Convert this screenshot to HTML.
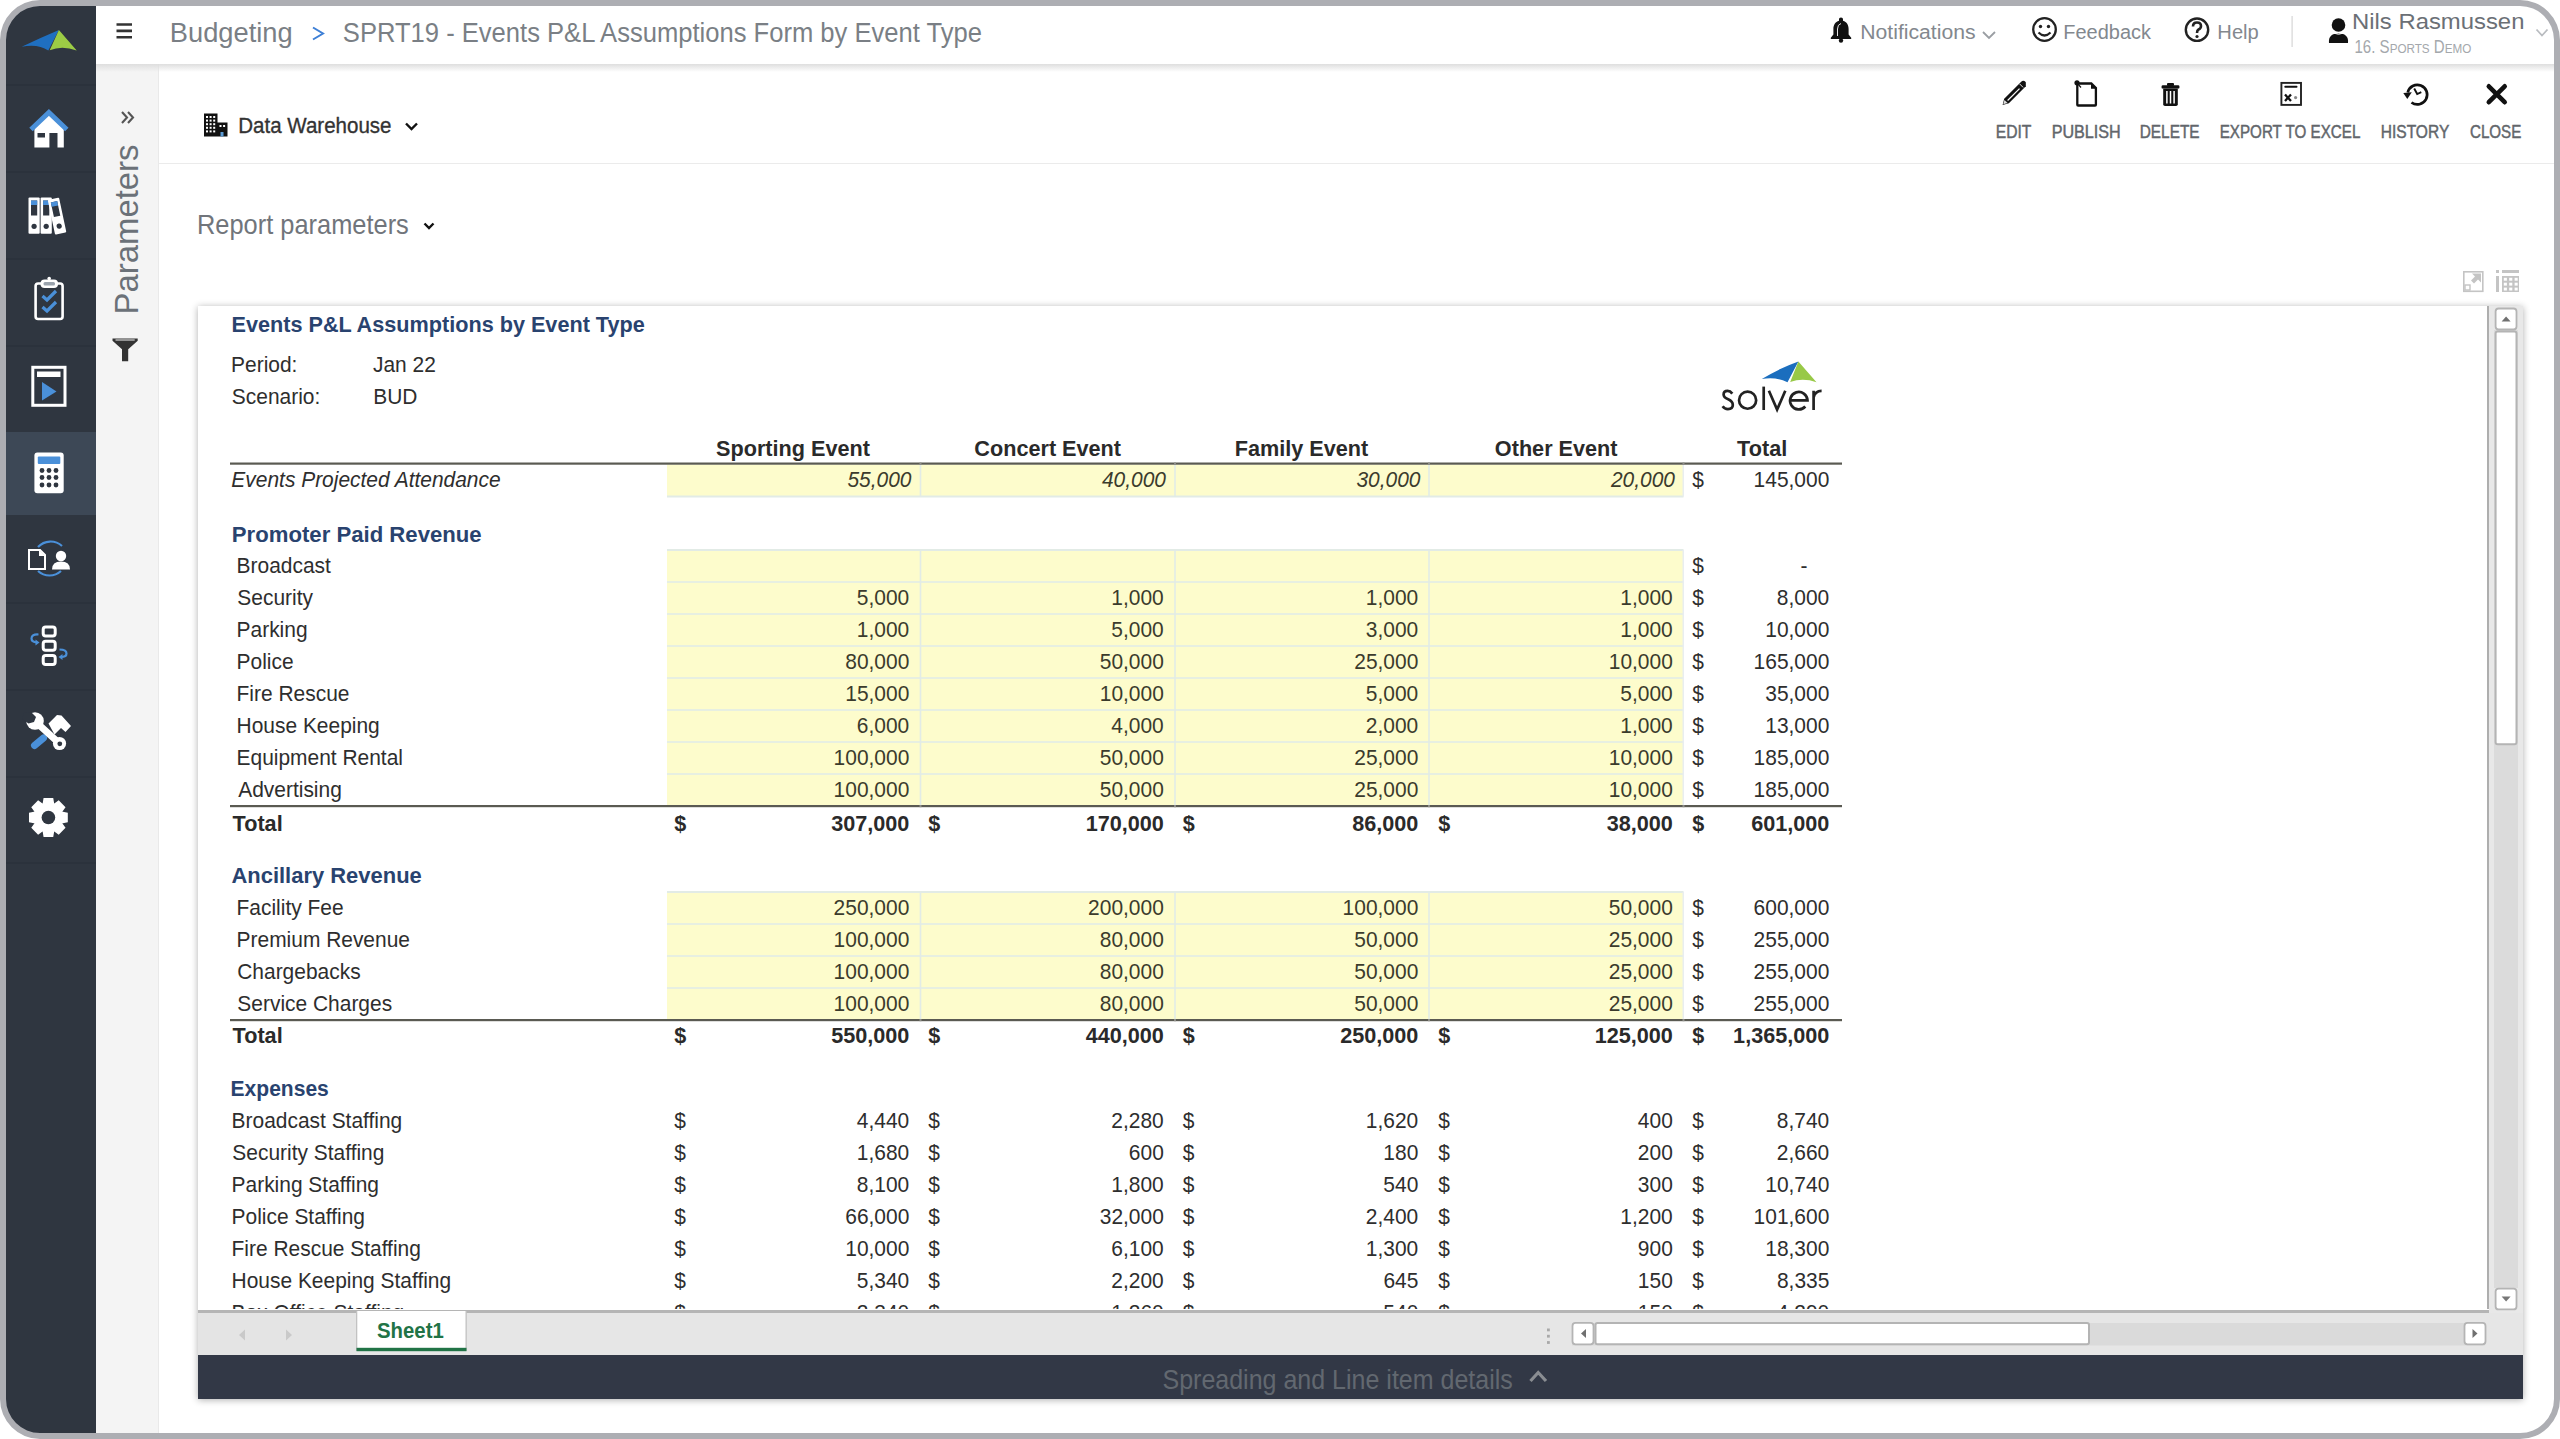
<!DOCTYPE html>
<html><head><meta charset="utf-8"><title>SPRT19 - Events P&amp;L Assumptions Form by Event Type</title>
<style>
html,body{margin:0;padding:0;width:2560px;height:1439px;overflow:hidden;background:#fff;}
body{position:relative;font-family:"Liberation Sans", sans-serif;}
svg text{font-family:"Liberation Sans", sans-serif;white-space:pre;}
</style></head><body>
<div style="position:absolute;left:0px;top:0px;width:2560px;height:1439px;background:#fff"></div><div style="position:absolute;left:159px;top:64px;width:2395px;height:1369px;background:#fff"></div><div style="position:absolute;left:96px;top:64px;width:63px;height:1369px;background:#f4f4f4;border-right:1px solid #e9e9e9;box-sizing:border-box"></div><div style="position:absolute;left:159px;top:64px;width:2395px;height:100px;background:#fff;border-bottom:1px solid #ebebeb;box-sizing:border-box"></div><div style="position:absolute;left:96px;top:6px;width:2458px;height:58px;background:#fff"></div><div style="position:absolute;left:96px;top:64px;width:2458px;height:8px;background:linear-gradient(#dedede,rgba(240,240,240,0))"></div><div style="position:absolute;left:6px;top:6px;width:90px;height:1427px;background:#2f3640"></div><div style="position:absolute;left:6px;top:84px;width:90px;height:2px;background:#2b323c"></div><div style="position:absolute;left:6px;top:170.5px;width:90px;height:2.0px;background:#2b323c"></div><div style="position:absolute;left:6px;top:257.5px;width:90px;height:2.0px;background:#2b323c"></div><div style="position:absolute;left:6px;top:344.5px;width:90px;height:2.0px;background:#2b323c"></div><div style="position:absolute;left:6px;top:601.5px;width:90px;height:2.0px;background:#2b323c"></div><div style="position:absolute;left:6px;top:688.5px;width:90px;height:2.0px;background:#2b323c"></div><div style="position:absolute;left:6px;top:775.5px;width:90px;height:2.0px;background:#2b323c"></div><div style="position:absolute;left:6px;top:861.5px;width:90px;height:2.0px;background:#2b323c"></div><div style="position:absolute;left:6px;top:432px;width:90px;height:83px;background:#3d4856"></div><div style="position:absolute;left:198px;top:306px;width:2325px;height:1093px;box-shadow:0 1px 7px rgba(0,0,0,.32);background:#fff"></div><svg style="position:absolute;left:0px;top:0px;" width="100" height="880" viewBox="0 0 100 880"><path fill="#1f6fc0" d="M21.7 46.7 Q40 38 58.9 30 L48.3 50.5 Q38 43.5 21.7 46.7Z"/><path fill="#9ccc45" d="M58.9 30 L76.7 50.5 Q62 45 49.7 50.3Z"/><path fill="#ffffff" d="M34.4 147.5V126.5L49 113L63.8 126.5V147.5H57.5V133H49.4V147.5Z"/><rect x="37.5" y="133" width="7.5" height="4.5" fill="#2f3640"/><path fill="none" stroke="#4a90d9" stroke-width="5" stroke-linejoin="miter" d="M31 129.5 L48.9 112.5 L66.8 129.5"/><g transform="rotate(0 34.1 233.8)"><rect x="28.5" y="197.5" width="11.2" height="36.3" fill="#ffffff" rx="1"/><rect x="31.0" y="200.5" width="6.199999999999999" height="15" fill="#2f3640"/><rect x="31.0" y="200.5" width="6.199999999999999" height="4.5" fill="#4a90d9"/><circle cx="34.1" cy="226.3" r="2.6" fill="#2f3640"/></g><g transform="rotate(0 46.2 233.8)"><rect x="40.6" y="197.5" width="11.2" height="36.3" fill="#ffffff" rx="1"/><rect x="43.1" y="200.5" width="6.199999999999999" height="15" fill="#2f3640"/><rect x="43.1" y="200.5" width="6.199999999999999" height="4.5" fill="#4a90d9"/><circle cx="46.2" cy="226.3" r="2.6" fill="#2f3640"/></g><g transform="rotate(-12 60.75 233.5)"><rect x="55" y="198" width="11.5" height="35.5" fill="#ffffff" rx="1"/><rect x="57.5" y="201" width="6.5" height="15" fill="#2f3640"/><rect x="57.5" y="201" width="6.5" height="4.5" fill="#4a90d9"/><circle cx="60.75" cy="226.0" r="2.6" fill="#2f3640"/></g><rect x="35.6" y="283.5" width="27" height="35.5" rx="2.5" fill="none" stroke="#ffffff" stroke-width="2.6"/><rect x="40.5" y="279.5" width="17.5" height="8.5" rx="4" fill="#ffffff"/><rect x="43.5" y="282" width="11.5" height="3.5" rx="1.5" fill="#9aa3ad"/><circle cx="49.2" cy="278.5" r="1.8" fill="#ffffff"/><path fill="none" stroke="#4a90d9" stroke-width="3.2" d="M42.5 296 L47 300 L56 291 M42.5 307 L47 311 L56 302"/><rect x="32.8" y="367.3" width="32.2" height="38" fill="none" stroke="#ffffff" stroke-width="3"/><rect x="37" y="371.5" width="23.5" height="5.5" fill="#ffffff"/><path fill="#4a90d9" d="M42 382 L56.5 391.5 L42 400.5Z"/><rect x="34.4" y="452.6" width="29.3" height="40.7" rx="3" fill="#ffffff"/><rect x="37.8" y="456.5" width="22.5" height="7.5" rx="1" fill="#4a90d9"/><circle cx="42" cy="470.5" r="2.4" fill="#2f3640"/><circle cx="49" cy="470.5" r="2.4" fill="#2f3640"/><circle cx="56" cy="470.5" r="2.4" fill="#2f3640"/><circle cx="42" cy="477.5" r="2.4" fill="#2f3640"/><circle cx="49" cy="477.5" r="2.4" fill="#2f3640"/><circle cx="56" cy="477.5" r="2.4" fill="#2f3640"/><circle cx="42" cy="485" r="2.4" fill="#2f3640"/><circle cx="49" cy="485" r="2.4" fill="#2f3640"/><circle cx="56" cy="485" r="2.4" fill="#2f3640"/><path fill="none" stroke="#4a90d9" stroke-width="2.2" d="M38 547 A17 17 0 0 1 62 546 M38 571 A17 17 0 0 0 61 571"/><path fill="#2f3640" stroke="#ffffff" stroke-width="2" d="M29 550H40L45 555V569H29Z"/><path fill="#ffffff" d="M39 550 V556 H45Z"/><circle cx="61" cy="556" r="5.2" fill="#ffffff"/><path fill="#ffffff" d="M52 569.5 Q52 561.5 61 561.5 Q70 561.5 70 569.5Z"/><rect x="43.2" y="627" width="12" height="9" rx="2.5" fill="none" stroke="#ffffff" stroke-width="3"/><rect x="43.2" y="641.2" width="12" height="9" rx="2.5" fill="none" stroke="#ffffff" stroke-width="3"/><rect x="43.2" y="655.5" width="12" height="9" rx="2.5" fill="none" stroke="#ffffff" stroke-width="3"/><path fill="none" stroke="#4a90d9" stroke-width="2.2" d="M38.5 634.5 Q31.5 634 31.5 638.5 Q31.5 642 37 642.5"/><path fill="#4a90d9" d="M35.5 639.5 L39.5 642.5 L35.5 645.5Z"/><path fill="none" stroke="#4a90d9" stroke-width="2.2" d="M59.5 649.5 Q66.5 649.5 66.5 653.5 Q66.5 657 61 657"/><path fill="#4a90d9" d="M62.5 654 L58.5 657 L62.5 660Z"/><path fill="none" stroke="#4a90d9" stroke-width="7" stroke-linecap="round" d="M34.5 745.5 L43.5 738"/><path fill="#ffffff" d="M48.5 723.5 L57 715 L61.5 715.5 L71 726 L65.5 732 L61 728 L54.5 734.5Z"/><path fill="none" stroke="#ffffff" stroke-width="7" stroke-linecap="round" d="M37.5 723.5 L59.5 743.5"/><circle cx="35" cy="721" r="8.8" fill="#ffffff"/><path fill="#2f3640" d="M24 713 L31 712 L36 717 L34 722 L28.5 723.5 L22 719Z"/><circle cx="59.5" cy="743.5" r="6.6" fill="#ffffff"/><circle cx="59.8" cy="743.8" r="2.4" fill="#2f3640"/><polygon fill="#ffffff" points="67.81,812.66 67.81,822.34 61.65,823.40 61.94,822.70 65.54,827.80 58.70,834.64 53.60,831.04 54.30,830.75 53.24,836.91 43.56,836.91 42.50,830.75 43.20,831.04 38.10,834.64 31.26,827.80 34.86,822.70 35.15,823.40 28.99,822.34 28.99,812.66 35.15,811.60 34.86,812.30 31.26,807.20 38.10,800.36 43.20,803.96 42.50,804.25 43.56,798.09 53.24,798.09 54.30,804.25 53.60,803.96 58.70,800.36 65.54,807.20 61.94,812.30 61.65,811.60"/><circle cx="48.4" cy="817.5" r="6.8" fill="#2f3640"/></svg><svg style="position:absolute;left:96px;top:6px;" width="2458" height="58" viewBox="96 6 2458 58"><path fill="#333" d="M116.5 23.2h15.5v2.6h-15.5zM116.5 29.6h15.5v2.6h-15.5zM116.5 36h15.5v2.6h-15.5z"/><text transform="translate(169.75,42.20) scale(0.9628,1)" font-size="28.36" fill="#7a7f85">Budgeting</text><path fill="none" stroke="#3d7fd6" stroke-width="2" d="M313 27.5 L323 33.5 L313 39.5"/><text transform="translate(342.85,42.00) scale(0.9018,1)" font-size="28.36" fill="#7a7f85">SPRT19 - Events P&amp;L Assumptions Form by Event Type</text><path fill="#111" d="M1841 17.5c1.3 0 2 .9 2 2v1.3c3.8 1 5.6 4.2 5.6 8.3v5.4l2.6 3.3v1.3h-20.4v-1.3l2.6-3.3v-5.4c0-4.1 1.8-7.3 5.6-8.3v-1.3c0-1.1.7-2 2-2z"/><circle cx="1841" cy="40.6" r="2.2" fill="#111"/><path fill="none" stroke="#fff" stroke-width="0.9" d="M1837.5 36 V29 Q1837.5 24.5 1841 23.5"/><text transform="translate(1860.25,38.70) scale(1.0411,1)" font-size="20.36" fill="#83888e">Notifications</text><path fill="none" stroke="#9a9ea3" stroke-width="1.8" d="M1983 32 L1989 38 L1995 32"/><circle cx="2044.5" cy="29.5" r="11.3" fill="none" stroke="#222" stroke-width="2.3"/><circle cx="2040.5" cy="26.5" r="1.7" fill="#222"/><circle cx="2048.5" cy="26.5" r="1.7" fill="#222"/><path fill="none" stroke="#222" stroke-width="2.2" d="M2038.5 32.5 Q2044.5 38.5 2050.5 32.5"/><text transform="translate(2063.35,38.70) scale(0.9799,1)" font-size="20.36" fill="#83888e">Feedback</text><circle cx="2197" cy="29.7" r="11.2" fill="none" stroke="#222" stroke-width="2.4"/><path fill="none" stroke="#222" stroke-width="2.6" d="M2193 26.5 Q2193 22.5 2197 22.5 Q2201 22.5 2201 26 Q2201 28.5 2198.5 29.5 Q2197 30.3 2197 33"/><circle cx="2197" cy="36.5" r="1.6" fill="#222"/><text transform="translate(2217.34,38.70) scale(0.9910,1)" font-size="20.36" fill="#83888e">Help</text><rect x="2291.5" y="16" width="1.2" height="31" fill="#d6d6d6"/><circle cx="2338.5" cy="25" r="6.8" fill="#111"/><path fill="#111" d="M2329 43 Q2328 33.5 2338.5 33.5 Q2349 33.5 2348 43Z"/><path fill="none" stroke="#fff" stroke-width="1" d="M2333 33 Q2338.5 35.5 2344 33"/><text transform="translate(2352.03,29.00) scale(1.0730,1)" font-size="22.25" fill="#6b7076">Nils Rasmussen</text><text transform="translate(2354.5,52.6) scale(0.86,1)" font-size="17.5" fill="#a4a8ac">16. S<tspan font-size="13.6">PORTS</tspan> D<tspan font-size="13.6">EMO</tspan></text><path fill="none" stroke="#b9bcc0" stroke-width="1.8" d="M2536.5 29.5 L2542 35.5 L2547.5 29.5"/></svg><svg style="position:absolute;left:1980px;top:70px;" width="574" height="90" viewBox="1980 70 574 90"><text stroke="#62666b" stroke-width="0.45" transform="translate(1995.71,137.70) scale(0.8966,1)" font-size="17.45" fill="#62666b">EDIT</text><text stroke="#62666b" stroke-width="0.45" transform="translate(2051.67,137.70) scale(0.9259,1)" font-size="17.45" fill="#62666b">PUBLISH</text><text stroke="#62666b" stroke-width="0.45" transform="translate(2139.73,137.70) scale(0.8826,1)" font-size="17.45" fill="#62666b">DELETE</text><text stroke="#62666b" stroke-width="0.45" transform="translate(2219.75,137.70) scale(0.8706,1)" font-size="17.45" fill="#62666b">EXPORT TO EXCEL</text><text stroke="#62666b" stroke-width="0.45" transform="translate(2380.72,137.70) scale(0.8916,1)" font-size="17.45" fill="#62666b">HISTORY</text><text stroke="#62666b" stroke-width="0.45" transform="translate(2469.94,137.70) scale(0.8687,1)" font-size="17.45" fill="#62666b">CLOSE</text><path fill="#111" d="M2002.6 105 L2004.2 98.63 L2021.17 81.67 Q2023.5 79.8 2025.83 82.2 L2025.83 86.33 L2008.87 103.29Z"/><path stroke="#fff" stroke-width="1.2" d="M2007.6 100.5 L2019.5 88.6"/><path stroke="#fff" stroke-width="0.9" d="M2019.6 83.9 L2023.1 87.4"/><path fill="#ddd" d="M2003.3 104.3 L2004.5 100 L2007.6 103Z"/><path fill="none" stroke="#111" stroke-width="2.3" d="M2077.3 83.5h14l4.6 4.6v16.6q0 .8-.8.8h-17q-.8 0-.8-.8z"/><path fill="#111" d="M2091 83.5v5.3h5z"/><circle cx="2077" cy="82.8" r="2.6" fill="#111"/><path stroke="#111" stroke-width="1.2" d="M2077.5 83.5l3.5 4"/><rect x="2161.6" y="85.2" width="17.8" height="3.4" rx="1.2" fill="#111"/><rect x="2167" y="83" width="7" height="3" rx="1" fill="#111"/><path fill="#111" d="M2163.2 88.5h14.6v15.8q0 1.8-1.8 1.8h-11q-1.8 0-1.8-1.8z"/><path stroke="#fff" stroke-width="1.5" d="M2166.9 91v12.5M2170.5 91v12.5M2174.1 91v12.5"/><rect x="2281.4" y="82.9" width="19.6" height="22" fill="none" stroke="#222" stroke-width="1.9"/><rect x="2284.3" y="85.8" width="13.2" height="1.9" rx="0.9" fill="#111"/><path stroke="#111" stroke-width="2.3" d="M2285 94.5l6 6.5M2291 94.5l-6 6.5"/><circle cx="2295.6" cy="97.6" r="1.6" fill="#888"/><path fill="none" stroke="#111" stroke-width="2.7" d="M2407.8 92.5 A9.8 9.8 0 1 1 2411.5 102.5"/><path fill="#111" d="M2403.3 93 L2411.8 92.2 L2407.3 99Z"/><path fill="none" stroke="#111" stroke-width="1.9" d="M2414.2 88.5 L2417.2 94 L2421.3 92.2"/><path stroke="#111" stroke-width="4.6" stroke-linecap="round" d="M2488.8 86.3l15.9 15.9M2504.7 86.3l-15.9 15.9"/></svg><svg style="position:absolute;left:96px;top:64px;" width="63" height="336" viewBox="96 64 63 336"><path fill="none" stroke="#555" stroke-width="2.1" d="M122 112l5 5.5l-5 5.5M128 112l5 5.5l-5 5.5"/><text transform="translate(137.7,314.41) rotate(-90) scale(0.9832,1)" font-size="33.45" fill="#6b7178">Parameters</text><path fill="#333" d="M112.5 338.5h25.2v2.2l-9.5 8.5v12.1h-6.2v-12.1l-9.5-8.5z"/><path fill="#f4f4f4" d="M115.5 339.5h19.2v1h-19.2z"/></svg><svg style="position:absolute;left:160px;top:100px;" width="2394" height="200" viewBox="160 100 2394 200"><path fill="#111" d="M204 113.5h13.5v23h-13.5z M217.5 122.5h10v14h-10z"/><rect x="206.0" y="116.0" width="2" height="2" fill="#fff"/><rect x="209.6" y="116.0" width="2" height="2" fill="#fff"/><rect x="213.2" y="116.0" width="2" height="2" fill="#fff"/><rect x="206.0" y="119.6" width="2" height="2" fill="#fff"/><rect x="209.6" y="119.6" width="2" height="2" fill="#fff"/><rect x="213.2" y="119.6" width="2" height="2" fill="#fff"/><rect x="206.0" y="123.2" width="2" height="2" fill="#fff"/><rect x="209.6" y="123.2" width="2" height="2" fill="#fff"/><rect x="213.2" y="123.2" width="2" height="2" fill="#fff"/><rect x="206.0" y="126.8" width="2" height="2" fill="#fff"/><rect x="209.6" y="126.8" width="2" height="2" fill="#fff"/><rect x="213.2" y="126.8" width="2" height="2" fill="#fff"/><rect x="206.0" y="130.4" width="2" height="2" fill="#fff"/><rect x="209.6" y="130.4" width="2" height="2" fill="#fff"/><rect x="213.2" y="130.4" width="2" height="2" fill="#fff"/><rect x="219.5" y="125" width="2" height="2" fill="#fff"/><rect x="223.1" y="125" width="2" height="2" fill="#fff"/><rect x="220.5" y="132" width="3" height="4.5" fill="#5b9bd5"/><text stroke="#333" stroke-width="0.35" transform="translate(238.31,133.00) scale(0.9226,1)" font-size="22.25" fill="#333">Data Warehouse</text><path fill="none" stroke="#111" stroke-width="2.4" d="M406 123.5l5.5 5.5l5.5-5.5"/><text transform="translate(196.90,234.40) scale(0.9200,1)" font-size="27.64" fill="#71757b">Report parameters</text><path fill="none" stroke="#111" stroke-width="2.4" d="M424.5 223.5l4.5 4.5l4.5-4.5"/><rect x="2463.8" y="271.8" width="19" height="19.5" fill="none" stroke="#c4c4c4" stroke-width="1.6"/><rect x="2465" y="285" width="5" height="5" fill="none" stroke="#c4c4c4" stroke-width="1.4"/><path fill="#c4c4c4" d="M2472 273.5h9v9l-3-3l-4 4l-3-3l4-4z"/><rect x="2496" y="270" width="3" height="3" fill="#c4c4c4"/><rect x="2496" y="276" width="3" height="16" fill="#c4c4c4"/><rect x="2502" y="270" width="17" height="3" fill="#c4c4c4"/><rect x="2502" y="276" width="17" height="16" fill="#c4c4c4"/><rect x="2503.8" y="277.8" width="3.1" height="2.9" fill="#fff"/><rect x="2509.2" y="277.8" width="3.1" height="2.9" fill="#fff"/><rect x="2514.6" y="277.8" width="3.1" height="2.9" fill="#fff"/><rect x="2503.8" y="282.7" width="3.1" height="2.9" fill="#fff"/><rect x="2509.2" y="282.7" width="3.1" height="2.9" fill="#fff"/><rect x="2514.6" y="282.7" width="3.1" height="2.9" fill="#fff"/><rect x="2503.8" y="287.6" width="3.1" height="2.9" fill="#fff"/><rect x="2509.2" y="287.6" width="3.1" height="2.9" fill="#fff"/><rect x="2514.6" y="287.6" width="3.1" height="2.9" fill="#fff"/></svg><svg style="position:absolute;left:198px;top:306px;" width="2289" height="1003" viewBox="198 306 2289 1003"><rect x="198" y="306" width="2289" height="1005" fill="#fff"/><rect x="667" y="464.5" width="1016.5" height="32" fill="#fdfccc"/><rect x="667" y="495.5" width="1016.5" height="2" fill="#e2ebe6"/><rect x="919.7" y="464.5" width="1.6" height="32" fill="#e2ebe6"/><rect x="1174.2" y="464.5" width="1.6" height="32" fill="#e2ebe6"/><rect x="1428.2" y="464.5" width="1.6" height="32" fill="#e2ebe6"/><rect x="1682.5" y="464.5" width="1.5" height="32" fill="#e9eef0"/><rect x="667" y="550" width="1016.5" height="256" fill="#fdfccc"/><rect x="667" y="581.2" width="1016.5" height="1.6" fill="#e2ebe6"/><rect x="667" y="613.2" width="1016.5" height="1.6" fill="#e2ebe6"/><rect x="667" y="645.2" width="1016.5" height="1.6" fill="#e2ebe6"/><rect x="667" y="677.2" width="1016.5" height="1.6" fill="#e2ebe6"/><rect x="667" y="709.2" width="1016.5" height="1.6" fill="#e2ebe6"/><rect x="667" y="741.2" width="1016.5" height="1.6" fill="#e2ebe6"/><rect x="667" y="773.2" width="1016.5" height="1.6" fill="#e2ebe6"/><rect x="667" y="549" width="1016.5" height="2" fill="#e2ebe6"/><rect x="667" y="805" width="1016.5" height="2" fill="#e2ebe6"/><rect x="919.7" y="550" width="1.6" height="256" fill="#e2ebe6"/><rect x="1174.2" y="550" width="1.6" height="256" fill="#e2ebe6"/><rect x="1428.2" y="550" width="1.6" height="256" fill="#e2ebe6"/><rect x="1682.5" y="550" width="1.5" height="256" fill="#e9eef0"/><rect x="667" y="892" width="1016.5" height="128" fill="#fdfccc"/><rect x="667" y="923.2" width="1016.5" height="1.6" fill="#e2ebe6"/><rect x="667" y="955.2" width="1016.5" height="1.6" fill="#e2ebe6"/><rect x="667" y="987.2" width="1016.5" height="1.6" fill="#e2ebe6"/><rect x="667" y="891" width="1016.5" height="2" fill="#e2ebe6"/><rect x="667" y="1019" width="1016.5" height="2" fill="#e2ebe6"/><rect x="919.7" y="892" width="1.6" height="128" fill="#e2ebe6"/><rect x="1174.2" y="892" width="1.6" height="128" fill="#e2ebe6"/><rect x="1428.2" y="892" width="1.6" height="128" fill="#e2ebe6"/><rect x="1682.5" y="892" width="1.5" height="128" fill="#e9eef0"/><rect x="230" y="462.5" width="1612" height="2.2" fill="#5a5a52"/><rect x="919.5" y="462.5" width="2" height="2.2" fill="#8e8e88"/><rect x="1174" y="462.5" width="2" height="2.2" fill="#8e8e88"/><rect x="1428" y="462.5" width="2" height="2.2" fill="#8e8e88"/><rect x="1682.5" y="462.5" width="2" height="2.2" fill="#8e8e88"/><rect x="230" y="805" width="1612" height="2.2" fill="#5a5a52"/><rect x="919.5" y="805" width="2" height="2.2" fill="#8e8e88"/><rect x="1174" y="805" width="2" height="2.2" fill="#8e8e88"/><rect x="1428" y="805" width="2" height="2.2" fill="#8e8e88"/><rect x="1682.5" y="805" width="2" height="2.2" fill="#8e8e88"/><rect x="230" y="1019" width="1612" height="2.2" fill="#5a5a52"/><rect x="919.5" y="1019" width="2" height="2.2" fill="#8e8e88"/><rect x="1174" y="1019" width="2" height="2.2" fill="#8e8e88"/><rect x="1428" y="1019" width="2" height="2.2" fill="#8e8e88"/><rect x="1682.5" y="1019" width="2" height="2.2" fill="#8e8e88"/><text transform="translate(231.54,332.00) scale(0.9600,1)" font-size="22.55" fill="#29436f" font-weight="bold">Events P&amp;L Assumptions by Event Type</text><text transform="translate(231.07,371.70) scale(0.9600,1)" font-size="21.82" fill="#2e2e2e">Period:</text><text transform="translate(372.99,371.70) scale(0.9600,1)" font-size="21.82" fill="#2e2e2e">Jan 22</text><text transform="translate(231.86,403.60) scale(0.9600,1)" font-size="21.82" fill="#2e2e2e">Scenario:</text><text transform="translate(373.27,403.60) scale(0.9600,1)" font-size="21.82" fill="#2e2e2e">BUD</text><path fill="#1b6ebe" d="M1761.8 379 Q1780 368 1798.4 361.5 L1787.5 382.3 Q1776 376.5 1761.8 379Z"/><path fill="#98c947" d="M1798.4 361.5 L1816.5 382.3 Q1803 377.5 1790.2 382Z"/><g fill="none" stroke="#222" stroke-width="2.7" stroke-linecap="butt"><path d="M1732.3 393.6 Q1730.3 390.9 1727.6 390.9 Q1723.6 390.9 1723.6 394.5 Q1723.6 397.4 1728.2 399.3 Q1732.8 401.3 1732.8 405 Q1732.8 409.1 1727.9 409.1 Q1724.6 409.1 1722.6 406.2"/><circle cx="1747.6" cy="400.2" r="8.55"/><path d="M1763.7 386.6 V410"/><path d="M1768.9 390.8 L1777.1 409.6 L1785.3 390.8" stroke-linejoin="miter"/><path d="M1789.9 400.4 H1807.5 A8.7 8.7 0 1 0 1805.3 406.5"/><path d="M1813.6 390.8 V410 M1813.6 397.5 Q1815 390.9 1821.6 390.9"/></g><text transform="translate(716.07,456.20) scale(0.9600,1)" font-size="22.55" fill="#2a2a2a" font-weight="bold">Sporting Event</text><text transform="translate(974.33,456.20) scale(0.9600,1)" font-size="22.55" fill="#2a2a2a" font-weight="bold">Concert Event</text><text transform="translate(1234.66,456.20) scale(0.9600,1)" font-size="22.55" fill="#2a2a2a" font-weight="bold">Family Event</text><text transform="translate(1494.87,456.20) scale(0.9600,1)" font-size="22.55" fill="#2a2a2a" font-weight="bold">Other Event</text><text transform="translate(1737.10,456.20) scale(0.9600,1)" font-size="22.55" fill="#2a2a2a" font-weight="bold">Total</text><text transform="translate(231.37,487.20) scale(0.9600,1)" font-size="21.82" fill="#2e2e2e" font-style="italic">Events Projected Attendance</text><text transform="translate(847.42,487.20) scale(0.9600,1)" font-size="21.82" fill="#3b3b2c" font-style="italic">55,000</text><text transform="translate(1101.92,487.20) scale(0.9600,1)" font-size="21.82" fill="#3b3b2c" font-style="italic">40,000</text><text transform="translate(1356.42,487.20) scale(0.9600,1)" font-size="21.82" fill="#3b3b2c" font-style="italic">30,000</text><text transform="translate(1610.92,487.20) scale(0.9600,1)" font-size="21.82" fill="#3b3b2c" font-style="italic">20,000</text><text transform="translate(1692.29,487.20) scale(0.9600,1)" font-size="21.82" fill="#2e2e2e">$</text><text transform="translate(1753.62,487.20) scale(0.9600,1)" font-size="21.82" fill="#2e2e2e">145,000</text><text transform="translate(231.80,542.20) scale(0.9827,1)" font-size="22.55" fill="#29436f" font-weight="bold">Promoter Paid Revenue</text><text transform="translate(236.57,573.30) scale(0.9600,1)" font-size="21.82" fill="#2e2e2e">Broadcast</text><text transform="translate(1692.29,573.30) scale(0.9600,1)" font-size="21.82" fill="#2e2e2e">$</text><text transform="translate(1800.43,573.30) scale(0.9600,1)" font-size="21.82" fill="#2e2e2e">-</text><text transform="translate(237.36,605.30) scale(0.9600,1)" font-size="21.82" fill="#2e2e2e">Security</text><text transform="translate(856.87,605.30) scale(0.9600,1)" font-size="21.82" fill="#3b3b2c">5,000</text><text transform="translate(1111.37,605.30) scale(0.9600,1)" font-size="21.82" fill="#3b3b2c">1,000</text><text transform="translate(1365.87,605.30) scale(0.9600,1)" font-size="21.82" fill="#3b3b2c">1,000</text><text transform="translate(1620.37,605.30) scale(0.9600,1)" font-size="21.82" fill="#3b3b2c">1,000</text><text transform="translate(1692.29,605.30) scale(0.9600,1)" font-size="21.82" fill="#2e2e2e">$</text><text transform="translate(1776.87,605.30) scale(0.9600,1)" font-size="21.82" fill="#2e2e2e">8,000</text><text transform="translate(236.57,637.30) scale(0.9600,1)" font-size="21.82" fill="#2e2e2e">Parking</text><text transform="translate(856.87,637.30) scale(0.9600,1)" font-size="21.82" fill="#3b3b2c">1,000</text><text transform="translate(1111.37,637.30) scale(0.9600,1)" font-size="21.82" fill="#3b3b2c">5,000</text><text transform="translate(1365.87,637.30) scale(0.9600,1)" font-size="21.82" fill="#3b3b2c">3,000</text><text transform="translate(1620.37,637.30) scale(0.9600,1)" font-size="21.82" fill="#3b3b2c">1,000</text><text transform="translate(1692.29,637.30) scale(0.9600,1)" font-size="21.82" fill="#2e2e2e">$</text><text transform="translate(1765.24,637.30) scale(0.9600,1)" font-size="21.82" fill="#2e2e2e">10,000</text><text transform="translate(236.57,669.30) scale(0.9600,1)" font-size="21.82" fill="#2e2e2e">Police</text><text transform="translate(845.24,669.30) scale(0.9600,1)" font-size="21.82" fill="#3b3b2c">80,000</text><text transform="translate(1099.74,669.30) scale(0.9600,1)" font-size="21.82" fill="#3b3b2c">50,000</text><text transform="translate(1354.24,669.30) scale(0.9600,1)" font-size="21.82" fill="#3b3b2c">25,000</text><text transform="translate(1608.74,669.30) scale(0.9600,1)" font-size="21.82" fill="#3b3b2c">10,000</text><text transform="translate(1692.29,669.30) scale(0.9600,1)" font-size="21.82" fill="#2e2e2e">$</text><text transform="translate(1753.62,669.30) scale(0.9600,1)" font-size="21.82" fill="#2e2e2e">165,000</text><text transform="translate(236.57,701.30) scale(0.9600,1)" font-size="21.82" fill="#2e2e2e">Fire Rescue</text><text transform="translate(845.24,701.30) scale(0.9600,1)" font-size="21.82" fill="#3b3b2c">15,000</text><text transform="translate(1099.74,701.30) scale(0.9600,1)" font-size="21.82" fill="#3b3b2c">10,000</text><text transform="translate(1365.87,701.30) scale(0.9600,1)" font-size="21.82" fill="#3b3b2c">5,000</text><text transform="translate(1620.37,701.30) scale(0.9600,1)" font-size="21.82" fill="#3b3b2c">5,000</text><text transform="translate(1692.29,701.30) scale(0.9600,1)" font-size="21.82" fill="#2e2e2e">$</text><text transform="translate(1765.24,701.30) scale(0.9600,1)" font-size="21.82" fill="#2e2e2e">35,000</text><text transform="translate(236.57,733.30) scale(0.9600,1)" font-size="21.82" fill="#2e2e2e">House Keeping</text><text transform="translate(856.87,733.30) scale(0.9600,1)" font-size="21.82" fill="#3b3b2c">6,000</text><text transform="translate(1111.37,733.30) scale(0.9600,1)" font-size="21.82" fill="#3b3b2c">4,000</text><text transform="translate(1365.87,733.30) scale(0.9600,1)" font-size="21.82" fill="#3b3b2c">2,000</text><text transform="translate(1620.37,733.30) scale(0.9600,1)" font-size="21.82" fill="#3b3b2c">1,000</text><text transform="translate(1692.29,733.30) scale(0.9600,1)" font-size="21.82" fill="#2e2e2e">$</text><text transform="translate(1765.24,733.30) scale(0.9600,1)" font-size="21.82" fill="#2e2e2e">13,000</text><text transform="translate(236.57,765.30) scale(0.9600,1)" font-size="21.82" fill="#2e2e2e">Equipment Rental</text><text transform="translate(833.62,765.30) scale(0.9600,1)" font-size="21.82" fill="#3b3b2c">100,000</text><text transform="translate(1099.74,765.30) scale(0.9600,1)" font-size="21.82" fill="#3b3b2c">50,000</text><text transform="translate(1354.24,765.30) scale(0.9600,1)" font-size="21.82" fill="#3b3b2c">25,000</text><text transform="translate(1608.74,765.30) scale(0.9600,1)" font-size="21.82" fill="#3b3b2c">10,000</text><text transform="translate(1692.29,765.30) scale(0.9600,1)" font-size="21.82" fill="#2e2e2e">$</text><text transform="translate(1753.62,765.30) scale(0.9600,1)" font-size="21.82" fill="#2e2e2e">185,000</text><text transform="translate(238.25,797.30) scale(0.9600,1)" font-size="21.82" fill="#2e2e2e">Advertising</text><text transform="translate(833.62,797.30) scale(0.9600,1)" font-size="21.82" fill="#3b3b2c">100,000</text><text transform="translate(1099.74,797.30) scale(0.9600,1)" font-size="21.82" fill="#3b3b2c">50,000</text><text transform="translate(1354.24,797.30) scale(0.9600,1)" font-size="21.82" fill="#3b3b2c">25,000</text><text transform="translate(1608.74,797.30) scale(0.9600,1)" font-size="21.82" fill="#3b3b2c">10,000</text><text transform="translate(1692.29,797.30) scale(0.9600,1)" font-size="21.82" fill="#2e2e2e">$</text><text transform="translate(1753.62,797.30) scale(0.9600,1)" font-size="21.82" fill="#2e2e2e">185,000</text><text transform="translate(232.58,830.50) scale(0.9600,1)" font-size="22.55" fill="#2a2a2a" font-weight="bold">Total</text><text transform="translate(674.23,830.50) scale(0.9600,1)" font-size="22.55" fill="#2a2a2a" font-weight="bold">$</text><text transform="translate(831.18,830.50) scale(0.9600,1)" font-size="22.55" fill="#2a2a2a" font-weight="bold">307,000</text><text transform="translate(928.23,830.50) scale(0.9600,1)" font-size="22.55" fill="#2a2a2a" font-weight="bold">$</text><text transform="translate(1085.68,830.50) scale(0.9600,1)" font-size="22.55" fill="#2a2a2a" font-weight="bold">170,000</text><text transform="translate(1182.73,830.50) scale(0.9600,1)" font-size="22.55" fill="#2a2a2a" font-weight="bold">$</text><text transform="translate(1352.19,830.50) scale(0.9600,1)" font-size="22.55" fill="#2a2a2a" font-weight="bold">86,000</text><text transform="translate(1438.23,830.50) scale(0.9600,1)" font-size="22.55" fill="#2a2a2a" font-weight="bold">$</text><text transform="translate(1606.69,830.50) scale(0.9600,1)" font-size="22.55" fill="#2a2a2a" font-weight="bold">38,000</text><text transform="translate(1692.23,830.50) scale(0.9600,1)" font-size="22.55" fill="#2a2a2a" font-weight="bold">$</text><text transform="translate(1751.18,830.50) scale(0.9600,1)" font-size="22.55" fill="#2a2a2a" font-weight="bold">601,000</text><text transform="translate(231.45,883.30) scale(0.9734,1)" font-size="22.55" fill="#29436f" font-weight="bold">Ancillary Revenue</text><text transform="translate(236.57,915.00) scale(0.9600,1)" font-size="21.82" fill="#2e2e2e">Facility Fee</text><text transform="translate(833.62,915.00) scale(0.9600,1)" font-size="21.82" fill="#3b3b2c">250,000</text><text transform="translate(1088.12,915.00) scale(0.9600,1)" font-size="21.82" fill="#3b3b2c">200,000</text><text transform="translate(1342.62,915.00) scale(0.9600,1)" font-size="21.82" fill="#3b3b2c">100,000</text><text transform="translate(1608.74,915.00) scale(0.9600,1)" font-size="21.82" fill="#3b3b2c">50,000</text><text transform="translate(1692.29,915.00) scale(0.9600,1)" font-size="21.82" fill="#2e2e2e">$</text><text transform="translate(1753.62,915.00) scale(0.9600,1)" font-size="21.82" fill="#2e2e2e">600,000</text><text transform="translate(236.57,947.00) scale(0.9600,1)" font-size="21.82" fill="#2e2e2e">Premium Revenue</text><text transform="translate(833.62,947.00) scale(0.9600,1)" font-size="21.82" fill="#3b3b2c">100,000</text><text transform="translate(1099.74,947.00) scale(0.9600,1)" font-size="21.82" fill="#3b3b2c">80,000</text><text transform="translate(1354.24,947.00) scale(0.9600,1)" font-size="21.82" fill="#3b3b2c">50,000</text><text transform="translate(1608.74,947.00) scale(0.9600,1)" font-size="21.82" fill="#3b3b2c">25,000</text><text transform="translate(1692.29,947.00) scale(0.9600,1)" font-size="21.82" fill="#2e2e2e">$</text><text transform="translate(1753.62,947.00) scale(0.9600,1)" font-size="21.82" fill="#2e2e2e">255,000</text><text transform="translate(237.25,979.00) scale(0.9600,1)" font-size="21.82" fill="#2e2e2e">Chargebacks</text><text transform="translate(833.62,979.00) scale(0.9600,1)" font-size="21.82" fill="#3b3b2c">100,000</text><text transform="translate(1099.74,979.00) scale(0.9600,1)" font-size="21.82" fill="#3b3b2c">80,000</text><text transform="translate(1354.24,979.00) scale(0.9600,1)" font-size="21.82" fill="#3b3b2c">50,000</text><text transform="translate(1608.74,979.00) scale(0.9600,1)" font-size="21.82" fill="#3b3b2c">25,000</text><text transform="translate(1692.29,979.00) scale(0.9600,1)" font-size="21.82" fill="#2e2e2e">$</text><text transform="translate(1753.62,979.00) scale(0.9600,1)" font-size="21.82" fill="#2e2e2e">255,000</text><text transform="translate(237.36,1011.00) scale(0.9600,1)" font-size="21.82" fill="#2e2e2e">Service Charges</text><text transform="translate(833.62,1011.00) scale(0.9600,1)" font-size="21.82" fill="#3b3b2c">100,000</text><text transform="translate(1099.74,1011.00) scale(0.9600,1)" font-size="21.82" fill="#3b3b2c">80,000</text><text transform="translate(1354.24,1011.00) scale(0.9600,1)" font-size="21.82" fill="#3b3b2c">50,000</text><text transform="translate(1608.74,1011.00) scale(0.9600,1)" font-size="21.82" fill="#3b3b2c">25,000</text><text transform="translate(1692.29,1011.00) scale(0.9600,1)" font-size="21.82" fill="#2e2e2e">$</text><text transform="translate(1753.62,1011.00) scale(0.9600,1)" font-size="21.82" fill="#2e2e2e">255,000</text><text transform="translate(232.58,1043.30) scale(0.9600,1)" font-size="22.55" fill="#2a2a2a" font-weight="bold">Total</text><text transform="translate(674.23,1043.30) scale(0.9600,1)" font-size="22.55" fill="#2a2a2a" font-weight="bold">$</text><text transform="translate(831.18,1043.30) scale(0.9600,1)" font-size="22.55" fill="#2a2a2a" font-weight="bold">550,000</text><text transform="translate(928.23,1043.30) scale(0.9600,1)" font-size="22.55" fill="#2a2a2a" font-weight="bold">$</text><text transform="translate(1085.68,1043.30) scale(0.9600,1)" font-size="22.55" fill="#2a2a2a" font-weight="bold">440,000</text><text transform="translate(1182.73,1043.30) scale(0.9600,1)" font-size="22.55" fill="#2a2a2a" font-weight="bold">$</text><text transform="translate(1340.18,1043.30) scale(0.9600,1)" font-size="22.55" fill="#2a2a2a" font-weight="bold">250,000</text><text transform="translate(1438.23,1043.30) scale(0.9600,1)" font-size="22.55" fill="#2a2a2a" font-weight="bold">$</text><text transform="translate(1594.68,1043.30) scale(0.9600,1)" font-size="22.55" fill="#2a2a2a" font-weight="bold">125,000</text><text transform="translate(1692.23,1043.30) scale(0.9600,1)" font-size="22.55" fill="#2a2a2a" font-weight="bold">$</text><text transform="translate(1733.11,1043.30) scale(0.9600,1)" font-size="22.55" fill="#2a2a2a" font-weight="bold">1,365,000</text><text transform="translate(230.58,1096.00) scale(0.9338,1)" font-size="22.55" fill="#29436f" font-weight="bold">Expenses</text><text transform="translate(231.57,1128.30) scale(0.9600,1)" font-size="21.82" fill="#2e2e2e">Broadcast Staffing</text><text transform="translate(674.29,1128.30) scale(0.9600,1)" font-size="21.82" fill="#2e2e2e">$</text><text transform="translate(856.87,1128.30) scale(0.9600,1)" font-size="21.82" fill="#2e2e2e">4,440</text><text transform="translate(928.29,1128.30) scale(0.9600,1)" font-size="21.82" fill="#2e2e2e">$</text><text transform="translate(1111.37,1128.30) scale(0.9600,1)" font-size="21.82" fill="#2e2e2e">2,280</text><text transform="translate(1182.79,1128.30) scale(0.9600,1)" font-size="21.82" fill="#2e2e2e">$</text><text transform="translate(1365.87,1128.30) scale(0.9600,1)" font-size="21.82" fill="#2e2e2e">1,620</text><text transform="translate(1438.29,1128.30) scale(0.9600,1)" font-size="21.82" fill="#2e2e2e">$</text><text transform="translate(1637.86,1128.30) scale(0.9600,1)" font-size="21.82" fill="#2e2e2e">400</text><text transform="translate(1692.29,1128.30) scale(0.9600,1)" font-size="21.82" fill="#2e2e2e">$</text><text transform="translate(1776.87,1128.30) scale(0.9600,1)" font-size="21.82" fill="#2e2e2e">8,740</text><text transform="translate(232.36,1160.30) scale(0.9600,1)" font-size="21.82" fill="#2e2e2e">Security Staffing</text><text transform="translate(674.29,1160.30) scale(0.9600,1)" font-size="21.82" fill="#2e2e2e">$</text><text transform="translate(856.87,1160.30) scale(0.9600,1)" font-size="21.82" fill="#2e2e2e">1,680</text><text transform="translate(928.29,1160.30) scale(0.9600,1)" font-size="21.82" fill="#2e2e2e">$</text><text transform="translate(1128.86,1160.30) scale(0.9600,1)" font-size="21.82" fill="#2e2e2e">600</text><text transform="translate(1182.79,1160.30) scale(0.9600,1)" font-size="21.82" fill="#2e2e2e">$</text><text transform="translate(1383.36,1160.30) scale(0.9600,1)" font-size="21.82" fill="#2e2e2e">180</text><text transform="translate(1438.29,1160.30) scale(0.9600,1)" font-size="21.82" fill="#2e2e2e">$</text><text transform="translate(1637.86,1160.30) scale(0.9600,1)" font-size="21.82" fill="#2e2e2e">200</text><text transform="translate(1692.29,1160.30) scale(0.9600,1)" font-size="21.82" fill="#2e2e2e">$</text><text transform="translate(1776.87,1160.30) scale(0.9600,1)" font-size="21.82" fill="#2e2e2e">2,660</text><text transform="translate(231.57,1192.30) scale(0.9600,1)" font-size="21.82" fill="#2e2e2e">Parking Staffing</text><text transform="translate(674.29,1192.30) scale(0.9600,1)" font-size="21.82" fill="#2e2e2e">$</text><text transform="translate(856.87,1192.30) scale(0.9600,1)" font-size="21.82" fill="#2e2e2e">8,100</text><text transform="translate(928.29,1192.30) scale(0.9600,1)" font-size="21.82" fill="#2e2e2e">$</text><text transform="translate(1111.37,1192.30) scale(0.9600,1)" font-size="21.82" fill="#2e2e2e">1,800</text><text transform="translate(1182.79,1192.30) scale(0.9600,1)" font-size="21.82" fill="#2e2e2e">$</text><text transform="translate(1383.36,1192.30) scale(0.9600,1)" font-size="21.82" fill="#2e2e2e">540</text><text transform="translate(1438.29,1192.30) scale(0.9600,1)" font-size="21.82" fill="#2e2e2e">$</text><text transform="translate(1637.86,1192.30) scale(0.9600,1)" font-size="21.82" fill="#2e2e2e">300</text><text transform="translate(1692.29,1192.30) scale(0.9600,1)" font-size="21.82" fill="#2e2e2e">$</text><text transform="translate(1765.24,1192.30) scale(0.9600,1)" font-size="21.82" fill="#2e2e2e">10,740</text><text transform="translate(231.57,1224.30) scale(0.9600,1)" font-size="21.82" fill="#2e2e2e">Police Staffing</text><text transform="translate(674.29,1224.30) scale(0.9600,1)" font-size="21.82" fill="#2e2e2e">$</text><text transform="translate(845.24,1224.30) scale(0.9600,1)" font-size="21.82" fill="#2e2e2e">66,000</text><text transform="translate(928.29,1224.30) scale(0.9600,1)" font-size="21.82" fill="#2e2e2e">$</text><text transform="translate(1099.74,1224.30) scale(0.9600,1)" font-size="21.82" fill="#2e2e2e">32,000</text><text transform="translate(1182.79,1224.30) scale(0.9600,1)" font-size="21.82" fill="#2e2e2e">$</text><text transform="translate(1365.87,1224.30) scale(0.9600,1)" font-size="21.82" fill="#2e2e2e">2,400</text><text transform="translate(1438.29,1224.30) scale(0.9600,1)" font-size="21.82" fill="#2e2e2e">$</text><text transform="translate(1620.37,1224.30) scale(0.9600,1)" font-size="21.82" fill="#2e2e2e">1,200</text><text transform="translate(1692.29,1224.30) scale(0.9600,1)" font-size="21.82" fill="#2e2e2e">$</text><text transform="translate(1753.62,1224.30) scale(0.9600,1)" font-size="21.82" fill="#2e2e2e">101,600</text><text transform="translate(231.57,1256.30) scale(0.9600,1)" font-size="21.82" fill="#2e2e2e">Fire Rescue Staffing</text><text transform="translate(674.29,1256.30) scale(0.9600,1)" font-size="21.82" fill="#2e2e2e">$</text><text transform="translate(845.24,1256.30) scale(0.9600,1)" font-size="21.82" fill="#2e2e2e">10,000</text><text transform="translate(928.29,1256.30) scale(0.9600,1)" font-size="21.82" fill="#2e2e2e">$</text><text transform="translate(1111.37,1256.30) scale(0.9600,1)" font-size="21.82" fill="#2e2e2e">6,100</text><text transform="translate(1182.79,1256.30) scale(0.9600,1)" font-size="21.82" fill="#2e2e2e">$</text><text transform="translate(1365.87,1256.30) scale(0.9600,1)" font-size="21.82" fill="#2e2e2e">1,300</text><text transform="translate(1438.29,1256.30) scale(0.9600,1)" font-size="21.82" fill="#2e2e2e">$</text><text transform="translate(1637.86,1256.30) scale(0.9600,1)" font-size="21.82" fill="#2e2e2e">900</text><text transform="translate(1692.29,1256.30) scale(0.9600,1)" font-size="21.82" fill="#2e2e2e">$</text><text transform="translate(1765.24,1256.30) scale(0.9600,1)" font-size="21.82" fill="#2e2e2e">18,300</text><text transform="translate(231.57,1288.30) scale(0.9600,1)" font-size="21.82" fill="#2e2e2e">House Keeping Staffing</text><text transform="translate(674.29,1288.30) scale(0.9600,1)" font-size="21.82" fill="#2e2e2e">$</text><text transform="translate(856.87,1288.30) scale(0.9600,1)" font-size="21.82" fill="#2e2e2e">5,340</text><text transform="translate(928.29,1288.30) scale(0.9600,1)" font-size="21.82" fill="#2e2e2e">$</text><text transform="translate(1111.37,1288.30) scale(0.9600,1)" font-size="21.82" fill="#2e2e2e">2,200</text><text transform="translate(1182.79,1288.30) scale(0.9600,1)" font-size="21.82" fill="#2e2e2e">$</text><text transform="translate(1383.41,1288.30) scale(0.9600,1)" font-size="21.82" fill="#2e2e2e">645</text><text transform="translate(1438.29,1288.30) scale(0.9600,1)" font-size="21.82" fill="#2e2e2e">$</text><text transform="translate(1637.86,1288.30) scale(0.9600,1)" font-size="21.82" fill="#2e2e2e">150</text><text transform="translate(1692.29,1288.30) scale(0.9600,1)" font-size="21.82" fill="#2e2e2e">$</text><text transform="translate(1776.92,1288.30) scale(0.9600,1)" font-size="21.82" fill="#2e2e2e">8,335</text><text transform="translate(231.57,1320.30) scale(0.9600,1)" font-size="21.82" fill="#2e2e2e">Box Office Staffing</text><text transform="translate(674.29,1320.30) scale(0.9600,1)" font-size="21.82" fill="#2e2e2e">$</text><text transform="translate(856.87,1320.30) scale(0.9600,1)" font-size="21.82" fill="#2e2e2e">2,340</text><text transform="translate(928.29,1320.30) scale(0.9600,1)" font-size="21.82" fill="#2e2e2e">$</text><text transform="translate(1111.37,1320.30) scale(0.9600,1)" font-size="21.82" fill="#2e2e2e">1,260</text><text transform="translate(1182.79,1320.30) scale(0.9600,1)" font-size="21.82" fill="#2e2e2e">$</text><text transform="translate(1383.36,1320.30) scale(0.9600,1)" font-size="21.82" fill="#2e2e2e">540</text><text transform="translate(1438.29,1320.30) scale(0.9600,1)" font-size="21.82" fill="#2e2e2e">$</text><text transform="translate(1637.86,1320.30) scale(0.9600,1)" font-size="21.82" fill="#2e2e2e">150</text><text transform="translate(1692.29,1320.30) scale(0.9600,1)" font-size="21.82" fill="#2e2e2e">$</text><text transform="translate(1776.87,1320.30) scale(0.9600,1)" font-size="21.82" fill="#2e2e2e">4,290</text></svg><div style="position:absolute;left:2487px;top:306px;width:2px;height:1007px;background:#aeaeae"></div><div style="position:absolute;left:198px;top:1309px;width:2291px;height:4px;background:linear-gradient(#fff 0,#fff 25%,#b5b5b5 25%,#b5b5b5 100%)"></div><svg style="position:absolute;left:198px;top:300px;" width="2325" height="1100" viewBox="198 300 2325 1100"><rect x="2489" y="306" width="34" height="1007" fill="#e8e8e8"/><rect x="2494" y="330" width="24" height="958" fill="#dbdbdb"/><rect x="2495.6" y="308.5" width="20.90000000000009" height="21.0" rx="3" fill="#fff" stroke="#b4b4b4" stroke-width="1.8"/><path fill="#707070" d="M2501.6 321.5h9l-4.5-5z"/><rect x="2495.6" y="331.4" width="20.9" height="412.9" rx="2" fill="#fff" stroke="#b4b4b4" stroke-width="2"/><rect x="2495.6" y="1288.6" width="20.90000000000009" height="20.800000000000182" rx="3" fill="#fff" stroke="#b4b4b4" stroke-width="1.8"/><path fill="#777" d="M2501.6 1296.5h9l-4.5 5z"/><rect x="198" y="1313" width="2325" height="42" fill="#e6e6e6"/><rect x="198" y="1313" width="158.5" height="42" fill="#e4e4e4"/><path fill="#c9c9c9" d="M245 1329.5v11l-6-5.5z M286 1329.5v11l6-5.5z"/><rect x="356.5" y="1311" width="109.5" height="40" fill="#fff"/><rect x="356" y="1311" width="1.3" height="40" fill="#c2c2c2"/><rect x="465.5" y="1311" width="1.3" height="40" fill="#c2c2c2"/><rect x="356.5" y="1347.8" width="110" height="3.4" fill="#217346"/><text transform="translate(376.99,1337.50) scale(0.9215,1)" font-size="22.11" fill="#217346" font-weight="bold">Sheet1</text><rect x="1547" y="1328.5" width="2.8" height="2.8" fill="#a9a9a9"/><rect x="1547" y="1334.8" width="2.8" height="2.8" fill="#a9a9a9"/><rect x="1547" y="1341.1" width="2.8" height="2.8" fill="#a9a9a9"/><rect x="1572" y="1323" width="913" height="22.5" fill="#dadada"/><rect x="1572.5" y="1322.9" width="21.0" height="21.399999999999864" rx="3" fill="#fff" stroke="#b4b4b4" stroke-width="1.8"/><path fill="#707070" d="M1586 1329v9l-5-4.5z"/><rect x="1595.5" y="1322.9" width="493.5" height="21.4" rx="2" fill="#fff" stroke="#b4b4b4" stroke-width="2"/><rect x="2464.5" y="1322.9" width="21.0" height="21.399999999999864" rx="3" fill="#fff" stroke="#b4b4b4" stroke-width="1.8"/><path fill="#707070" d="M2472.5 1329v9l5-4.5z"/><rect x="198" y="1355" width="2325" height="44" fill="#323846"/><text transform="translate(1162.47,1388.50) scale(0.9300,1)" font-size="26.91" fill="#626870">Spreading and Line item details</text><path fill="none" stroke="#8a8d92" stroke-width="3.2" d="M1530.5 1381 L1538.2 1372.5 L1546 1381"/></svg><svg style="position:absolute;left:0px;top:0px;z-index:50" width="2560" height="1439" viewBox="0 0 2560 1439"><path fill="#adaeb3" fill-rule="evenodd" d="M0 0H2560V1439H0Z M40 6H2520A34 34 0 0 1 2554 40V1399A34 34 0 0 1 2520 1433H40A34 34 0 0 1 6 1399V40A34 34 0 0 1 40 6Z"/><path fill="#fff" fill-rule="evenodd" d="M0 0H2560V1439H0Z M40 0H2520A40 40 0 0 1 2560 40V1399A40 40 0 0 1 2520 1439H40A40 40 0 0 1 0 1399V40A40 40 0 0 1 40 0Z"/></svg>
</body></html>
